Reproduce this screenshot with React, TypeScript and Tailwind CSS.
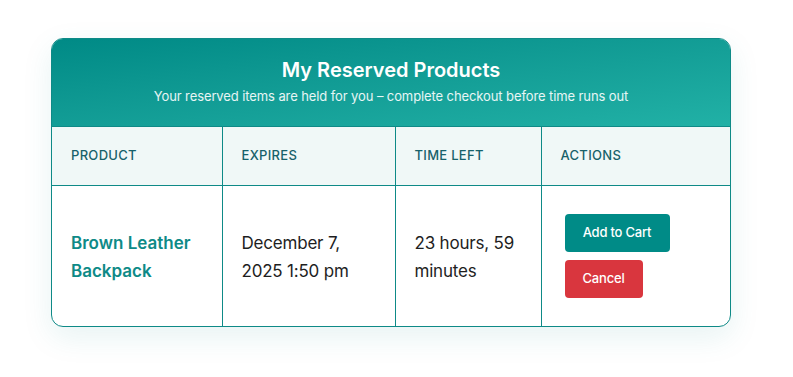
export default function App() {
  const font = { fontFamily: "Inter, 'Noto Sans', sans-serif" }
  return (
    <div className="w-[793px] h-[377px] bg-white pt-[38px] pl-[51px]" style={font}>
      <div className="w-[680px] rounded-[12px] border border-[#0e8a87] overflow-hidden shadow-[0_10px_30px_rgba(20,140,135,0.10)] bg-white">
        <div className="h-[88px] pb-[3px] flex flex-col items-center justify-center bg-gradient-to-br from-[#008a86] to-[#21b1a6] text-white border-b border-[#0e8a87]">
          <h1 className="text-[20px] leading-[28px] font-semibold">My Reserved Products</h1>
          <p className="text-[13px] leading-[20px] mt-[2px] text-white/90 tracking-[-0.1px]">
            Your reserved items are held for you – complete checkout before time runs out
          </p>
        </div>
        <table className="w-full border-collapse table-fixed">
          <colgroup>
            <col className="w-[170px]" />
            <col className="w-[173px]" />
            <col className="w-[146px]" />
            <col />
          </colgroup>
          <thead>
            <tr className="bg-[#f0f8f7] h-[58px]">
              {["Product", "Expires", "Time Left", "Actions"].map((h, i) => (
                <th
                  key={h}
                  className={
                    "text-left font-medium uppercase text-[13px] tracking-[0.3px] text-[#17616a] px-[19px] border-b border-[#0e8a87] " +
                    (i < 3 ? "border-r" : "")
                  }
                >
                  {h}
                </th>
              ))}
            </tr>
          </thead>
          <tbody>
            <tr className="h-[141px]">
              <td className="px-[19px] border-r border-[#0e8a87] align-middle">
                <span className="text-[17px] leading-[28px] font-semibold text-[#0e8a87] block pt-[2px]">
                  Brown Leather Backpack
                </span>
              </td>
              <td className="px-[19px] border-r border-[#0e8a87] align-middle">
                <span className="text-[17px] leading-[28px] text-[#1e1e1e] block pt-[2px] tracking-[-0.2px]">
                  December 7, 2025 1:50 pm
                </span>
              </td>
              <td className="px-[19px] border-r border-[#0e8a87] align-middle">
                <span className="text-[17px] leading-[28px] text-[#1e1e1e] block pt-[2px] tracking-[-0.2px]">
                  23 hours, 59 minutes
                </span>
              </td>
              <td className="pl-[23px] pr-[20px] align-middle">
                <div className="flex flex-col items-start gap-[8px]">
                  <button className="h-[38px] w-[105px] rounded-[4px] bg-[#008b87] text-white text-[13px] font-medium tracking-[-0.2px]">
                    Add to Cart
                  </button>
                  <button className="h-[38px] w-[78px] rounded-[4px] bg-[#d9363e] text-white text-[13px] font-medium tracking-[-0.2px]">
                    Cancel
                  </button>
                </div>
              </td>
            </tr>
          </tbody>
        </table>
      </div>
    </div>
  )
}
